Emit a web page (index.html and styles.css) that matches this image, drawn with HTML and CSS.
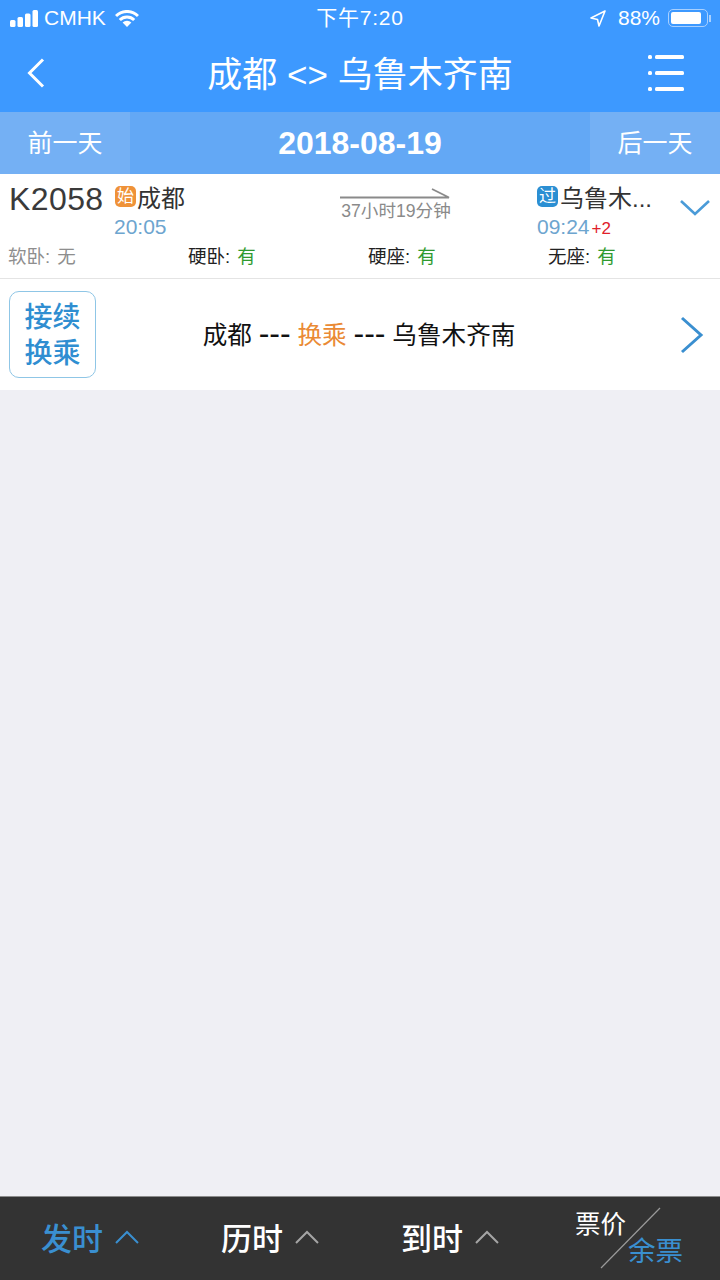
FILE: index.html
```html
<!DOCTYPE html>
<html lang="zh-CN">
<head>
  <meta charset="UTF-8">
  <meta name="viewport" content="width=device-width, initial-scale=1.0">
  <title>成都 - 乌鲁木齐南</title>
  <link rel="stylesheet" href="styles.css">
</head>

<body>
  <div class="page">
    <header class="top">
      <div class="status">
        <div class="status-left">
          <svg class="signal" width="28" height="17" viewBox="0 0 28 17">
            <rect x="0" y="10" width="5.5" height="7" rx="1.5"/>
            <rect x="7.5" y="7" width="5.5" height="10" rx="1.5"/>
            <rect x="15" y="3.5" width="5.5" height="13.5" rx="1.5"/>
            <rect x="22.5" y="0" width="5.5" height="17" rx="1.5"/>
          </svg>
          <span class="carrier">CMHK</span>
          <svg class="wifi" width="24" height="17" viewBox="0 0 24 17">
            <path d="M1 6a15.6 15.6 0 0 1 22 0" fill="none" stroke="#fff" stroke-width="3"/>
            <path d="M4.8 10a10.2 10.2 0 0 1 14.4 0" fill="none" stroke="#fff" stroke-width="3"/>
            <path d="M7.6 12.6a6.2 6.2 0 0 1 8.8 0L12 17z" fill="#fff"/>
          </svg>
        </div>
        <div class="clock">下午7:20</div>
        <div class="status-right">
          <svg class="location" width="16" height="17" viewBox="0 0 16 17">
            <path d="M15 1L1 8L7.5 9.5L9 16z" fill="none" stroke="#fff" stroke-width="1.6" stroke-linejoin="round"/>
          </svg>
          <span class="percent">88%</span>
          <div class="battery"><div class="battery-fill"></div></div>
          <div class="battery-cap"></div>
        </div>
      </div>

      <div class="nav">
        <svg class="back" width="18" height="30" viewBox="0 0 18 30">
          <path d="M16 1.5L2.5 15L16 28.5" fill="none" stroke="#fff" stroke-width="3"/>
        </svg>
        <h1 class="title">成都 &lt;&gt; 乌鲁木齐南</h1>
        <svg class="menu" width="36" height="36" viewBox="0 0 36 36">
          <rect x="0" y="0" width="4" height="4" rx="1.5"/>
          <rect x="7" y="0" width="29" height="4" rx="1.5"/>
          <rect x="0" y="16" width="4" height="4" rx="1.5"/>
          <rect x="7" y="16" width="29" height="4" rx="1.5"/>
          <rect x="0" y="32" width="4" height="4" rx="1.5"/>
          <rect x="7" y="32" width="29" height="4" rx="1.5"/>
        </svg>
      </div>

      <div class="dates">
        <div class="day-btn">前一天</div>
        <div class="date">2018-08-19</div>
        <div class="day-btn">后一天</div>
      </div>
    </header>

    <main class="content">
      <section class="train">
        <div class="train-main">
          <div class="train-no">K2058</div>
          <div class="stop stop-from">
            <div class="stop-name"><span class="tag tag-start">始</span>成都</div>
            <div class="stop-time">20:05</div>
          </div>
          <div class="duration">
            <svg class="arrow" width="110" height="12" viewBox="0 0 110 12">
              <path d="M0 9.5H109L92 1" fill="none" stroke="#8a8a8a" stroke-width="1.8"/>
            </svg>
            <div class="duration-text">37小时19分钟</div>
          </div>
          <div class="stop stop-to">
            <div class="stop-name"><span class="tag tag-pass">过</span>乌鲁木...</div>
            <div class="stop-time">09:24<span class="plus-day">+2</span></div>
          </div>
          <svg class="expand" width="30" height="18" viewBox="0 0 30 18">
            <path d="M1 2L15 15L29 2" fill="none" stroke="#4a9bd8" stroke-width="2.6"/>
          </svg>
        </div>
        <div class="seats">
          <div class="seat seat-none">软卧: <span class="no">无</span></div>
          <div class="seat">硬卧: <span class="yes">有</span></div>
          <div class="seat">硬座: <span class="yes">有</span></div>
          <div class="seat">无座: <span class="yes">有</span></div>
        </div>
      </section>

      <section class="transfer">
        <div class="transfer-btn">接续<br>换乘</div>
        <div class="transfer-text">成都 <span class="dash">---</span> <span class="orange">换乘</span> <span class="dash">---</span> 乌鲁木齐南</div>
        <svg class="next" width="24" height="38" viewBox="0 0 24 38">
          <path d="M2 2L21 19L2 36" fill="none" stroke="#3a8fd0" stroke-width="3"/>
        </svg>
      </section>
    </main>

    <footer class="bottom">
      <div class="sort sort-active">发时
        <svg width="24" height="16" viewBox="0 0 24 16"><path d="M1 14L12 3L23 14" fill="none" stroke="#3a8fd0" stroke-width="2"/></svg>
      </div>
      <div class="sort">历时
        <svg width="24" height="16" viewBox="0 0 24 16"><path d="M1 14L12 3L23 14" fill="none" stroke="#a5a5a5" stroke-width="2"/></svg>
      </div>
      <div class="sort">到时
        <svg width="24" height="16" viewBox="0 0 24 16"><path d="M1 14L12 3L23 14" fill="none" stroke="#a5a5a5" stroke-width="2"/></svg>
      </div>
      <div class="switch">
        <span class="switch-price">票价</span>
        <svg class="slash" width="62" height="62" viewBox="0 0 62 62"><path d="M1 61L60 1" stroke="#9a9a9a" stroke-width="1.2"/></svg>
        <span class="switch-left">余票</span>
      </div>
    </footer>
  </div>
</body>
</html>
```

FILE: styles.css
```css
* {
  box-sizing: border-box;
}

body {
  margin: 0;
  font-family: "Liberation Sans", "Noto Sans CJK SC", sans-serif;
  background-color: #efeff4;
}

.page {
  width: 720px;
  height: 1280px;
  display: flex;
  flex-direction: column;
  overflow: hidden;
}

/* top blue block */
.top {
  background-color: #3d99ff;
  color: #fff;
}

.status {
  height: 36px;
  padding: 0 10px;
  display: flex;
  align-items: center;
  justify-content: space-between;
  font-size: 21px;
  position: relative;
}

.status-left,
.status-right {
  display: flex;
  align-items: center;
}

.signal {
  fill: #fff;
  margin-right: 6px;
}

.carrier {
  margin-right: 9px;
}

.clock {
  position: absolute;
  left: 0;
  right: 0;
  top: 5px;
  line-height: 26px;
  letter-spacing: 0.8px;
  text-align: center;
}

.location {
  margin-right: 12px;
}

.percent {
  margin-right: 8px;
}

.battery {
  width: 40px;
  height: 18px;
  padding: 2px;
  border: 1.5px solid #a8d0ff;
  border-radius: 5px;
}

.battery-fill {
  width: 30px;
  height: 100%;
  background-color: #fff;
  border-radius: 2px;
}

.battery-cap {
  width: 2px;
  height: 7px;
  margin-left: 1px;
  margin-right: -1px;
  background-color: #a8d0ff;
}

.nav {
  height: 76px;
  padding: 0 36px 2px;
  display: grid;
  grid-template-columns: 1fr auto 1fr;
  align-items: center;
}

.back {
  margin-left: -9px;
}

.title {
  margin: 0;
  padding-bottom: 4px;
  font-size: 35px;
  font-weight: normal;
}

.menu {
  fill: #fff;
  justify-self: end;
}

.dates {
  height: 62px;
  display: flex;
  background-color: #63a8f5;
}

.day-btn {
  width: 130px;
  background-color: #74b0f4;
  font-size: 25px;
  line-height: 62px;
  text-align: center;
}

.date {
  flex: 1;
  font-size: 32px;
  font-weight: bold;
  line-height: 62px;
  text-align: center;
}

/* list */
.content {
  flex: 1;
}

.train {
  height: 105px;
  background-color: #fff;
  border-bottom: 1px solid #e4e4e4;
}

.train-main {
  height: 64px;
  display: flex;
}

.train-no {
  width: 114px;
  padding: 6px 0 0 9px;
  font-size: 32px;
  letter-spacing: 0.4px;
  line-height: 38px;
  color: #3a3a3a;
}

.stop {
  padding-top: 7px;
}

.stop-from {
  width: 226px;
}

.stop-to {
  width: 143px;
}

.stop-name {
  display: flex;
  align-items: center;
  height: 30px;
  font-size: 24px;
  color: #333;
}

.stop-time {
  font-size: 21px;
  line-height: 26px;
  margin-top: 3px;
  color: #6da5cf;
}

.plus-day {
  margin-left: 2px;
  font-size: 17px;
  color: #e0202a;
}

.tag {
  width: 21px;
  height: 21px;
  margin-right: 2px;
  border-radius: 5px;
  color: #fff;
  font-size: 17px;
  line-height: 21px;
  text-align: center;
}

.tag-start {
  margin-left: 1px;
  margin-right: 1px;
  background-color: #ef9238;
}

.tag-pass {
  background-color: #2b8fd3;
}

.duration {
  width: 197px;
  padding-top: 14px;
}

.arrow {
  display: block;
}

.duration-text {
  width: 112px;
  margin-top: 1px;
  font-size: 17.6px;
  line-height: 20px;
  color: #8a8a8a;
  text-align: center;
  white-space: nowrap;
}

.expand {
  margin-top: 25px;
}

.seats {
  padding-left: 8px;
  display: grid;
  grid-template-columns: repeat(4, 180px);
  height: 34px;
  align-items: center;
}

.seat {
  font-size: 18.5px;
  color: #222;
}

.seat-none {
  color: #8e8e8e;
}

.no {
  margin-left: 2px;
}

.yes {
  margin-left: 2px;
  color: #2f9a2f;
}

.transfer {
  height: 111px;
  padding: 0 16px 0 9px;
  display: flex;
  align-items: center;
  background-color: #fff;
}

.transfer-btn {
  width: 87px;
  height: 87px;
  border: 1px solid #8fc6e6;
  border-radius: 10px;
  color: #2f8ed1;
  font-size: 28px;
  font-weight: 500;
  line-height: 36px;
  padding-top: 8px;
  text-align: center;
}

.transfer-text {
  flex: 1;
  padding: 0 58px 3px 0;
  font-size: 24.6px;
  color: #111;
  text-align: center;
}

.dash {
  font-size: 32px;
  line-height: 1;
}

.orange {
  color: #ea8a35;
}

/* bottom sort bar */
.bottom {
  height: 84px;
  display: flex;
  background-color: #333;
  border-top: 1px solid #8c8c8c;
}

.sort {
  width: 180px;
  padding-bottom: 4px;
  display: flex;
  align-items: center;
  justify-content: center;
  gap: 12px;
  color: #fff;
  font-size: 31px;
  font-weight: 500;
}

.sort-active {
  color: #3a8fd0;
}

.switch {
  width: 180px;
  position: relative;
}

.switch-price,
.switch-left {
  position: absolute;
  line-height: 30px;
}

.switch-price {
  left: 35px;
  top: 12px;
  font-size: 25.5px;
  color: #fff;
}

.switch-left {
  left: 88px;
  top: 40px;
  font-size: 27.5px;
  color: #3a8fd0;
}

.slash {
  position: absolute;
  left: 60px;
  top: 10px;
}
```
